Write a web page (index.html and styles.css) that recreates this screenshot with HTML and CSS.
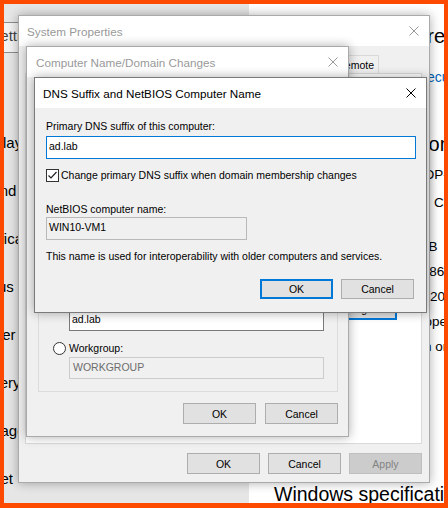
FILE: index.html
```html
<!DOCTYPE html>
<html lang="en">
<head>
<meta charset="utf-8">
<title>DNS Suffix and NetBIOS Computer Name</title>
<link rel="stylesheet" href="styles.css">
</head>
<body>
<div class="screen">
  <div class="settings">
    <nav class="nav">
      <div class="search">Find a setting</div>
      <ul class="nav-list">
        <li>Display</li>
        <li>Sound</li>
        <li>Notifications &amp; actions</li>
        <li>Focus assist</li>
        <li>Power &amp; sleep</li>
        <li>Battery</li>
        <li>Storage</li>
        <li>Tablet</li>
      </ul>
    </nav>
    <main class="pane">
      <p class="status">Your PC is monitored and protected.</p>
      <a class="link">See details in Windows Security</a>
      <h2 class="sub">Device specifications</h2>
      <dl class="specs">
        <div class="spec r1"><dt>Device name</dt><dd>DESKTOP-1A2B3C</dd></div>
        <div class="spec r2"><dt>Processor</dt><dd>Intel(R) Core(TM) i5-8250U CPU @ 1.60GHz</dd></div>
        <div class="spec"><dt>Installed RAM</dt><dd>4.00 GB</dd></div>
        <div class="spec"><dt>Device ID</dt><dd>55C0B86E-4F1A-4C3D-9B2E-7A1D0C5E2F61</dd></div>
        <div class="spec"><dt>Product ID</dt><dd>00331-20000-00000-AA416</dd></div>
        <div class="spec r6"><dt>System type</dt><dd>64-bit operating system, x64-based processor</dd></div>
        <div class="spec"><dt>Pen and touch</dt><dd>No pen or touch input is available for this display</dd></div>
      </dl>
      <h2 class="sub sub-win">Windows specifications</h2>
    </main>
  </div>

  <section class="win sysprops inactive">
    <header class="titlebar">
      <span class="title">System Properties</span>
      <svg class="close" viewBox="0 0 10 10"><path d="M0.5 0.5L9.5 9.5M9.5 0.5L0.5 9.5"/></svg>
    </header>
    <div class="sp-body">
      <div class="tabs">
        <span class="tab">Computer Name</span>
        <span class="tab">Hardware</span>
        <span class="tab">Advanced</span>
        <span class="tab">System Protection</span>
        <span class="tab">Remote</span>
      </div>
      <div class="tabpanel">
        <button class="btn btn-change default">Change...</button>
      </div>
      <div class="actions sp-actions">
        <button class="btn">OK</button>
        <button class="btn">Cancel</button>
        <button class="btn" disabled>Apply</button>
      </div>
    </div>
  </section>

  <section class="win compname inactive">
    <header class="titlebar">
      <span class="title">Computer Name/Domain Changes</span>
      <svg class="close" viewBox="0 0 10 10"><path d="M0.5 0.5L9.5 9.5M9.5 0.5L0.5 9.5"/></svg>
    </header>
    <div class="cn-body">
      <p class="lbl intro">You can change the name and the membership of this computer. Changes might affect access to network resources.</p>
      <div class="lbl">Computer name:</div>
      <div class="field">WIN10-VM1</div>
      <div class="lbl">Full computer name:</div>
      <div class="lbl">WIN10-VM1.ad.lab</div>
      <div class="more-row"><button class="btn">More...</button></div>
      <div class="group">
        <div class="lbl legend">Member of</div>
        <div class="radio-row">
          <svg class="radio" viewBox="0 0 13 13"><circle cx="6.5" cy="6.5" r="6" class="ring"/><circle cx="6.5" cy="6.5" r="3" class="dot"/></svg>
          <span>Domain:</span>
        </div>
        <div class="field gfield">ad.lab</div>
        <div class="radio-row wg">
          <svg class="radio" viewBox="0 0 13 13"><circle cx="6.5" cy="6.5" r="6" class="ring"/></svg>
          <span>Workgroup:</span>
        </div>
        <div class="field gfield disabled">WORKGROUP</div>
      </div>
      <div class="actions cn-actions">
        <button class="btn">OK</button>
        <button class="btn">Cancel</button>
      </div>
    </div>
  </section>

  <section class="win dns active">
    <header class="titlebar">
      <span class="title">DNS Suffix and NetBIOS Computer Name</span>
      <svg class="close" viewBox="0 0 10 10"><path d="M0.5 0.5L9.5 9.5M9.5 0.5L0.5 9.5"/></svg>
    </header>
    <div class="dns-body">
      <div class="lbl">Primary DNS suffix of this computer:</div>
      <div class="field focus suffix">ad.lab</div>
      <div class="check-row">
        <svg class="check" viewBox="0 0 13 13"><rect x="0.5" y="0.5" width="12" height="12" class="box"/><path d="M2.5 6.5L5 9L10.5 3" class="tick"/></svg>
        <span>Change primary DNS suffix when domain membership changes</span>
      </div>
      <div class="lbl nb-label">NetBIOS computer name:</div>
      <div class="field readonly netbios">WIN10-VM1</div>
      <p class="lbl note">This name is used for interoperability with older computers and services.</p>
      <div class="actions dns-actions">
        <button class="btn default">OK</button>
        <button class="btn">Cancel</button>
      </div>
    </div>
  </section>

  <div class="frame"></div>
</div>
</body>
</html>
```

FILE: styles.css
```css
* { box-sizing: border-box; }

html, body {
  margin: 0;
  padding: 0;
}

body {
  width: 448px;
  height: 508px;
  overflow: hidden;
  font-family: "Liberation Sans", Arial, sans-serif;
  font-size: 10.5px;
  color: #000;
}

.screen {
  position: relative;
  width: 448px;
  height: 508px;
  overflow: hidden;
  background: #fff;
}

/* ---------- Settings window (background) ---------- */
.settings {
  position: absolute;
  top: 0;
  left: 0;
  width: 900px;
  height: 508px;
  display: grid;
  grid-template-columns: 249px 1fr;
}

.nav {
  background: #e6e6e6;
  padding-top: 22px;
  font-size: 15px;
}

.search {
  margin-left: -63px;
  width: 288px;
  height: 31px;
  border: 1px solid #8c8c8c;
  background: #f2f2f2;
  color: #444;
  padding-left: 9px;
  line-height: 26px;
  white-space: nowrap;
}

.nav-list {
  list-style: none;
  margin: 66px 0 0 -27px;
  padding: 0;
}

.nav-list li {
  height: 48px;
  line-height: 48px;
  white-space: nowrap;
}

.pane {
  background: #fff;
  padding: 24px 0 0 25px;
  white-space: nowrap;
}

.status {
  margin: 0;
  text-indent: -6px;
  font-size: 20px;
  line-height: 24px;
  height: 24px;
}

.link {
  display: block;
  margin-top: 19px;
  text-indent: -5px;
  font-size: 14px;
  line-height: 20px;
  height: 20px;
  color: #0067b8;
}

.sub {
  margin: 45px 0 0;
  font-size: 20px;
  line-height: 24px;
  height: 24px;
  font-weight: normal;
}

.specs {
  margin: 8px 0 0;
  font-size: 13.5px;
  line-height: 22px;
}

.spec {
  display: grid;
  grid-template-columns: 114px auto;
  height: 25px;
}

.spec.r1 { height: 28px; }
.spec.r2 { height: 44px; }

.spec dt,
.spec dd { margin: 0; }

.spec.r1 dd { text-indent: -9px; }
.spec.r2 dd { text-indent: -2px; }
.spec.r6 dd { text-indent: -1px; }

.sub-win {
  margin-top: 121px;
  font-size: 19.5px;
}

/* ---------- Generic window ---------- */
.win {
  position: absolute;
  display: flex;
  flex-direction: column;
  background: #f0f0f0;
  border: 1px solid #aaaaaa;
  box-shadow: 0 0 10px rgba(0, 0, 0, 0.32);
  overflow: hidden;
}

.win.active { border-color: #7a7a7a; }

.titlebar {
  height: 30px;
  flex: none;
  display: flex;
  align-items: center;
  background: #fff;
  font-size: 11.7px;
}

.title {
  flex: 1;
  white-space: nowrap;
}

.inactive .title { color: #999; }

.close {
  width: 10px;
  height: 10px;
  flex: none;
  margin-right: 10px;
  fill: none;
  stroke: #000;
  stroke-width: 1;
}

.inactive .close { stroke: #999; }

.lbl {
  margin: 0;
  line-height: 13px;
  white-space: nowrap;
}

.field {
  height: 23px;
  border: 1px solid #7a7a7a;
  background: #fff;
  line-height: 18px;
  padding: 0 2px;
  white-space: nowrap;
  overflow: hidden;
}

.field.focus { border-color: #0078d7; }

.field.readonly {
  background: #f0f0f0;
  border-color: #b9b9b9;
}

.field.disabled {
  background: #f0f0f0;
  border-color: #cccccc;
  color: #6d6d6d;
  padding-left: 3px;
}

.actions {
  display: flex;
  justify-content: flex-end;
  flex: none;
}

.btn {
  width: 73px;
  height: 21px;
  padding: 0;
  border: 1px solid #adadad;
  background: #e1e1e1;
  font: inherit;
  color: #000;
  white-space: nowrap;
}

.btn.default { border: 2px solid #0078d7; }

.btn:disabled {
  background: #cccccc;
  border-color: #bfbfbf;
  color: #838383;
}

/* ---------- System Properties ---------- */
.sysprops {
  left: 18px;
  top: 15px;
  width: 412px;
  height: 468px;
}

.sysprops .titlebar { padding-left: 8px; }

.sp-body {
  flex: 1;
  display: flex;
  flex-direction: column;
  padding: 9px 7px 8px 6px;
}

.tabs {
  height: 18px;
  flex: none;
  display: flex;
  justify-content: flex-end;
  padding-right: 43px;
}

.tab {
  height: 18px;
  border: 1px solid #d9d9d9;
  border-bottom: 0;
  padding: 0 4px;
  line-height: 19px;
  margin-left: -1px;
  background: #f0f0f0;
  white-space: nowrap;
}

.tabpanel {
  height: 371px;
  flex: none;
  background: #fff;
  border: 1px solid #d9d9d9;
  padding: 223px 24px 0 0;
  display: flex;
  justify-content: flex-end;
  align-items: flex-start;
}

.btn-change {
  width: 76px;
  height: 23px;
}

.sp-actions {
  margin-top: 9px;
  gap: 8px;
}

/* ---------- Computer Name/Domain Changes ---------- */
.compname {
  left: 26px;
  top: 46px;
  width: 323px;
  height: 391px;
}

.compname .titlebar { padding-left: 9px; }

.cn-body {
  flex: 1;
  display: flex;
  flex-direction: column;
  justify-content: flex-end;
  padding: 0 10px 12px 11px;
  overflow: hidden;
}

.intro {
  white-space: normal;
  margin-bottom: 10px;
}

.cn-body > .field {
  margin: 3px 0 10px;
}

.more-row {
  display: flex;
  justify-content: flex-end;
  margin: 8px 0 10px;
}

.group {
  border: 1px solid #dcdcdc;
  padding: 0 13px 12px 14px;
}

.legend { margin: 4px 0 6px -6px; }

.radio-row {
  height: 14px;
  display: flex;
  align-items: center;
  gap: 3px;
  white-space: nowrap;
}

.radio-row.wg { margin-top: 10px; }

.radio {
  width: 13px;
  height: 13px;
  flex: none;
}

.radio .ring {
  fill: #fff;
  stroke: #333;
  stroke-width: 1;
}

.radio .dot { fill: #333; }

.gfield {
  height: 22px;
  margin: 2px 0 0 16px;
}

.cn-actions {
  margin-top: 11px;
  gap: 9px;
}

/* ---------- DNS Suffix dialog ---------- */
.dns {
  left: 34px;
  top: 77px;
  width: 393px;
  height: 236px;
}

.dns .titlebar { padding-left: 8px; }

.dns-body {
  flex: 1;
  padding: 12px 10px 13px 11px;
}

.suffix { margin-top: 3px; }

.check-row {
  margin-top: 10px;
  height: 13px;
  display: flex;
  align-items: center;
  gap: 2px;
  line-height: 13px;
  white-space: nowrap;
}

.check {
  width: 13px;
  height: 13px;
  flex: none;
}

.check .box {
  fill: #fff;
  stroke: #333;
  stroke-width: 1;
}

.check .tick {
  fill: none;
  stroke: #222;
  stroke-width: 1.2;
}

.nb-label { margin-top: 21px; }

.netbios {
  margin-top: 1px;
  width: 201px;
}

.note { margin-top: 10px; }

.dns-actions {
  margin-top: 16px;
  gap: 8px;
  padding-right: 2px;
}

.dns-actions .btn { height: 20px; }

/* ---------- Orange screenshot frame ---------- */
.frame {
  position: absolute;
  inset: 0;
  border-style: solid;
  border-color: #fe4a00;
  border-width: 4px 4px 5px 4px;
  pointer-events: none;
}
```
